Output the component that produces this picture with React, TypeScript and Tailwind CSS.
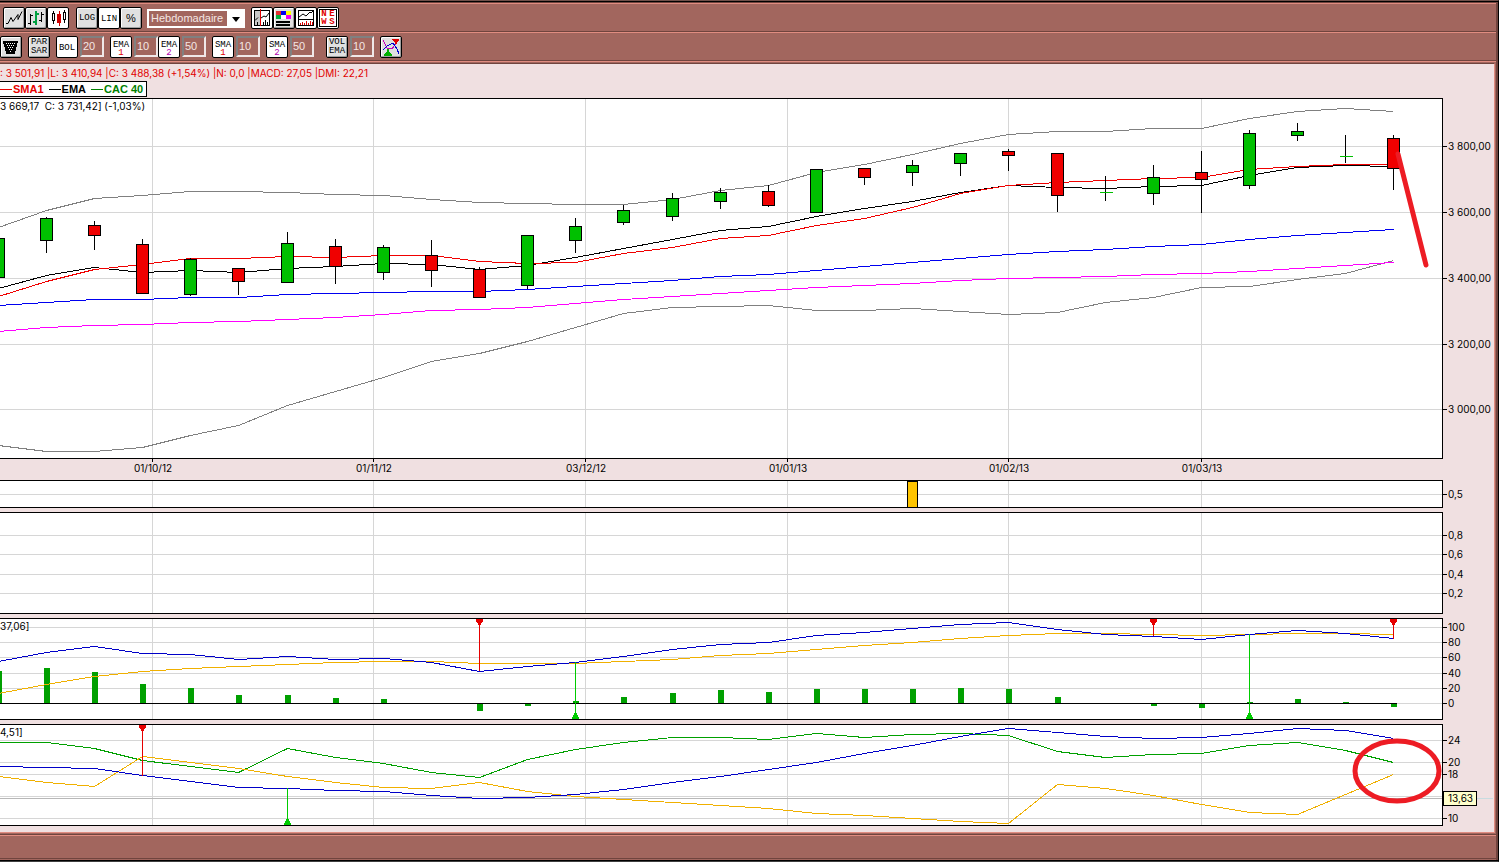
import type { ReactNode } from "react";

const GREEN = "#00c000";
const RED = "#f00000";

// x position of each weekly bar
const XS = [
  -2, 46, 94, 142, 190, 238, 287, 335, 383, 431, 479, 527, 575, 623, 672, 720,
  768, 816, 864, 912, 960, 1008, 1057, 1105, 1153, 1201, 1249, 1297, 1345, 1393,
];

const MONTHS = [
  { x: 152, label: "01/10/12" },
  { x: 373, label: "01/11/12" },
  { x: 585, label: "03/12/12" },
  { x: 787, label: "01/01/13" },
  { x: 1008, label: "01/02/13" },
  { x: 1201, label: "01/03/13" },
];

// high, body top, body bottom, low, up
const CANDLES: [number, number, number, number, boolean][] = [
  [238, 238, 277, 277, true],
  [216, 218, 240, 252, true],
  [220, 225, 235, 249, false],
  [238, 244, 293, 293, false],
  [257, 259, 294, 295, true],
  [268, 268, 281, 294, false],
  [231, 243, 282, 282, true],
  [238, 246, 266, 283, false],
  [244, 247, 272, 279, true],
  [239, 255, 270, 286, false],
  [266, 269, 297, 297, false],
  [235, 235, 285, 288, true],
  [217, 226, 240, 252, true],
  [204, 210, 222, 224, true],
  [192, 198, 216, 220, true],
  [187, 192, 201, 208, true],
  [184, 191, 205, 206, false],
  [168, 169, 212, 212, true],
  [168, 168, 177, 184, false],
  [159, 165, 172, 185, true],
  [152, 153, 163, 175, true],
  [148, 151, 155, 170, false],
  [153, 153, 195, 211, false],
  [175, 192, 192, 200, true],
  [164, 177, 193, 204, true],
  [150, 172, 179, 212, false],
  [129, 133, 185, 188, true],
  [122, 131, 135, 140, true],
  [134, 156, 156, 162, true],
  [134, 138, 168, 189, false],
];

const SMA = [296, 281, 269, 264, 258, 258, 256, 257, 255, 255, 261, 263, 262, 253, 247, 238, 235, 225, 218, 207, 193, 185, 182, 180, 178, 177, 169, 166, 164, 164];
const EMA = [288, 275, 267, 272, 270, 272, 268, 266, 263, 264, 269, 265, 257, 248, 239, 230, 226, 216, 208, 201, 192, 185, 187, 188, 186, 185, 175, 167, 165, 166];
const SLOW = [305, 302, 299, 299, 297, 297, 294, 293, 292, 291, 291, 289, 286, 283, 280, 276, 274, 270, 266, 262, 258, 254, 251, 249, 246, 244, 239, 235, 232, 229];
const LONG = [331, 327, 325, 324, 322, 321, 319, 317, 314, 310, 309, 307, 303, 299, 296, 293, 290, 287, 285, 283, 280, 278, 277, 276, 274, 273, 271, 268, 265, 262];
const BOL_HIGH = [227, 210, 198, 195, 191, 191, 192, 194, 195, 199, 202, 203, 204, 204, 199, 190, 185, 172, 164, 154, 143, 134, 131, 131, 128, 128, 118, 111, 108, 111];
const BOL_LOW = [445, 451, 451, 447, 435, 425, 405, 391, 377, 361, 353, 341, 327, 313, 307, 306, 305, 310, 310, 308, 311, 314, 312, 302, 297, 287, 286, 279, 273, 260];

const MACD = [661, 652, 646, 653, 654, 659, 656, 659, 658, 662, 671, 666, 662, 656, 649, 644, 642, 635, 632, 628, 624, 622, 629, 634, 636, 639, 634, 630, 633, 638];
const SIGNAL = [693, 684, 676, 671, 668, 666, 664, 662, 661, 661, 663, 663, 663, 661, 659, 655, 653, 649, 645, 642, 638, 635, 633, 633, 634, 635, 634, 633, 633, 634];
const HIST = [671, 668, 672, 684, 688, 695, 695, 698, 699, 703, 710, 705, 701, 697, 693, 690, 692, 689, 689, 689, 688, 689, 697, 703, 705, 707, 702, 699, 702, 706];

const DI_PLUS = [742, 742, 748, 760, 766, 772, 748, 757, 763, 772, 777, 759, 749, 742, 737, 737, 739, 733, 737, 734, 733, 735, 751, 757, 754, 753, 745, 742, 750, 762];
const DI_MINUS = [776, 782, 786, 756, 762, 768, 776, 782, 787, 788, 782, 791, 796, 799, 802, 805, 808, 813, 815, 818, 821, 823, 784, 788, 795, 804, 812, 814, 794, 774];
const ADX = [766, 767, 768, 775, 781, 787, 788, 790, 791, 795, 798, 797, 794, 789, 782, 776, 769, 762, 753, 745, 736, 728, 732, 736, 738, 737, 733, 728, 730, 738];

function Series({ values, color }: { values: number[]; color: string }) {
  return (
    <polyline
      points={values.map((y, i) => `${XS[i]},${y}`).join(" ")}
      fill="none"
      stroke={color}
    />
  );
}

interface PanelProps {
  name: string;
  top: number;
  bottom: number;
  end: number;
  levels: { y: number; label: string }[];
  children?: ReactNode;
  overlay?: ReactNode;
}

function Panel({ name, top, bottom, end, levels, children, overlay }: PanelProps) {
  return (
    <svg
      role="img"
      aria-label={name}
      viewBox={`0 ${top} 1494 ${end - top}`}
      className="block w-full font-[Inter,sans-serif] text-[10px]"
    >
      <g transform="translate(0.5 0.5)" shapeRendering="crispEdges">
        <rect x={-5} y={top} width={1447} height={bottom - top} fill="#fff" />
        {MONTHS.map((m) => (
          <line key={m.x} x1={m.x} x2={m.x} y1={top} y2={bottom} stroke="#d6d6d6" />
        ))}
        {levels.map((l) => (
          <g key={l.y}>
            <line x1={-1} x2={1442} y1={l.y} y2={l.y} stroke="#d6d6d6" />
            {l.label && <line x1={1442} x2={1446} y1={l.y} y2={l.y} stroke="#000" />}
          </g>
        ))}
        {children}
        <rect x={-5} y={top} width={1447} height={bottom - top} fill="none" stroke="#000" />
      </g>
      {levels.map((l) => (
        <text key={l.y} x={1448} y={l.y + 4}>
          {l.label}
        </text>
      ))}
      {overlay}
    </svg>
  );
}

function SellMark({ x, top, to }: { x: number; top: number; to: number }) {
  return (
    <g fill="#e60000">
      <rect x={x - 0.5} y={top} width={1} height={to - top} />
      <path d={`M${x - 3.5} ${top - 0.5}h7v3h-1v1h-1v2h-3v-2h-1v-1h-1z`} />
    </g>
  );
}

function BuyMark({ x, bottom, to }: { x: number; bottom: number; to: number }) {
  return (
    <g fill="#00cc00">
      <rect x={x - 0.5} y={to} width={1} height={bottom - to} />
      <path d={`M${x - 3.5} ${bottom + 0.5}h7v-2h-1v-2h-1v-2h-3v2h-1v2h-1z`} />
    </g>
  );
}

function PricePanel() {
  return (
    <Panel
      name="CAC 40"
      top={98}
      bottom={458}
      end={480}
      levels={[
        { y: 146, label: "3 800,00" },
        { y: 212, label: "3 600,00" },
        { y: 278, label: "3 400,00" },
        { y: 344, label: "3 200,00" },
        { y: 409, label: "3 000,00" },
      ]}
      overlay={
        <>
          <text x={0} y={110}>
            3 669,17{"\u00a0 "}C: 3 731,42] (-1,03%)
          </text>
          {MONTHS.map((m) => (
            <text key={m.x} x={m.x + 1} y={472} textAnchor="middle">
              {m.label}
            </text>
          ))}
          <line
            x1={1398}
            y1={154}
            x2={1426}
            y2={265}
            stroke="#ed1c24"
            strokeWidth={5}
            strokeLinecap="round"
          />
        </>
      }
    >
      {MONTHS.map((m) => (
        <line key={m.x} x1={m.x} x2={m.x} y1={458} y2={461} stroke="#000" />
      ))}
      <Series values={BOL_HIGH} color="#808080" />
      <Series values={BOL_LOW} color="#808080" />
      <Series values={LONG} color="#ff00ff" />
      <Series values={SLOW} color="#0000f0" />
      <Series values={EMA} color="#000" />
      <Series values={SMA} color="#f00000" />
      {CANDLES.map(([high, open, close, low, up], i) => (
        <g key={XS[i]}>
          {low > high && <line x1={XS[i]} x2={XS[i]} y1={high} y2={low} stroke="#000" />}
          {open === close ? (
            <line x1={XS[i] - 6} x2={XS[i] + 7} y1={open} y2={open} stroke={GREEN} />
          ) : (
            <rect
              x={XS[i] - 6}
              y={open}
              width={12}
              height={close - open}
              fill={up ? GREEN : RED}
              stroke="#000"
            />
          )}
        </g>
      ))}
    </Panel>
  );
}

function MacdPanel() {
  return (
    <Panel
      name="MACD"
      top={618}
      bottom={719}
      end={724}
      levels={[
        { y: 627, label: "100" },
        { y: 642, label: "80" },
        { y: 657, label: "60" },
        { y: 673, label: "40" },
        { y: 688, label: "20" },
        { y: 703, label: "0" },
      ]}
      overlay={
        <text x={0} y={630}>
          37,06]
        </text>
      }
    >
      {HIST.map((y, i) => (
        <rect
          key={XS[i]}
          x={XS[i] - 2.5}
          y={Math.min(y, 703) - 0.5}
          width={6}
          height={y === 703 ? 0 : Math.abs(703 - y) + 1}
          fill="#00a000"
        />
      ))}
      <Series values={SIGNAL} color="#f0b000" />
      <line x1={-1} x2={1396} y1={703} y2={703} stroke="#000" />
      <SellMark x={479} top={619} to={671} />
      <SellMark x={1153} top={619} to={636} />
      <SellMark x={1393} top={619} to={638} />
      <Series values={MACD} color="#0000c8" />
      <BuyMark x={575} bottom={718} to={661} />
      <BuyMark x={1249} bottom={718} to={633} />
    </Panel>
  );
}

function DmiPanel() {
  return (
    <Panel
      name="DMI"
      top={724}
      bottom={825}
      end={832}
      levels={[
        { y: 740, label: "24" },
        { y: 762, label: "20" },
        { y: 774, label: "18" },
        { y: 796, label: "" },
        { y: 818, label: "10" },
      ]}
      overlay={
        <>
          <text x={0} y={736}>
            4,51]
          </text>
          <g shapeRendering="crispEdges">
            <line x1={1477} x2={1493} y1={798.5} y2={798.5} stroke="#c8dce0" />
            <rect x={1443.5} y={791.5} width={33} height={14} fill="#ffffcc" stroke="#000" />
          </g>
          <text x={1448} y={802}>
            13,63
          </text>
          <ellipse
            cx={1397}
            cy={771}
            rx={42}
            ry={30}
            fill="none"
            stroke="#ed1c24"
            strokeWidth={5}
          />
        </>
      }
    >
      <line x1={-1} x2={1442} y1={798} y2={798} stroke="#b8b8b8" />
      <Series values={DI_PLUS} color="#00a000" />
      <Series values={DI_MINUS} color="#f0b000" />
      <Series values={ADX} color="#0000c8" />
      <SellMark x={142} top={725} to={775} />
      <BuyMark x={287} bottom={824} to={787} />
    </Panel>
  );
}

interface ToolProps {
  label: string;
  pressed?: boolean;
  children: ReactNode;
}

function Tool({ label, pressed, children }: ToolProps) {
  return (
    <button
      type="button"
      aria-label={label}
      className={`flex h-[22px] w-[22px] shrink-0 flex-col items-center justify-center rounded-[2px] border border-black font-['Liberation_Mono',monospace] text-[9px] leading-[9px] ${
        pressed
          ? "bg-white"
          : "bg-[#e0e0e0] shadow-[inset_1px_1px_0_#ffffff,inset_-1px_-1px_0_#a0a0a0]"
      }`}
    >
      {children}
    </button>
  );
}

function Icon({ children }: { children: ReactNode }) {
  return (
    <svg
      viewBox="0 0 20 20"
      className="block h-5 w-5"
      fill="none"
      stroke="#000"
      shapeRendering="crispEdges"
      aria-hidden="true"
    >
      {children}
    </svg>
  );
}

function Period({ label, value }: { label: string; value: string }) {
  return (
    <input
      type="text"
      aria-label={label}
      defaultValue={value}
      className="h-[21px] w-6 shrink-0 border-2 border-t-[#808080] border-r-[#f0e8e8] border-b-[#f0e8e8] border-l-[#808080] bg-[#a2665e] p-0 pb-[2px] pl-px font-['Liberation_Sans',sans-serif] text-[11px] leading-[15px] text-[#f4e6e4] outline-none"
    />
  );
}

function Average({ name, index, value }: { name: string; index: string; value: string }) {
  return (
    <>
      <Tool label={`${name} ${index}`} pressed>
        <span className="pt-[3px] leading-[8px]">{name}</span>
        <span className={index === "1" ? "leading-[8px] text-[#e00000]" : "leading-[8px] text-[#b000b0]"}>
          {index}
        </span>
      </Tool>
      <Period label={`${name} ${index} period`} value={value} />
    </>
  );
}

function ChartToolbar() {
  return (
    <div className="flex h-[29px] items-start border-t border-b border-t-[#e08c80] border-b-[#70443e] pt-[3px] pl-[3px]">
      <div className="flex">
        <Tool label="Line chart">
          <Icon>
            <path d="M2 15.500h2l3-6 2 4 5-7v5l4-8" shapeRendering="auto" />
          </Icon>
        </Tool>
        <Tool label="Bar chart">
          <Icon>
            <path d="M4.500 6v11M2 15.500h3M4 7.500h3M15.500 4v10M13 12.500h3M15 6.500h3" />
            <path d="M10 2.500v14M7 13.500h3M10 5.500h3" stroke="#00a040" strokeWidth={2} />
          </Icon>
        </Tool>
        <Tool label="Candlesticks" pressed>
          <Icon>
            <path d="M5.500 3v3M5.500 12v4M16.500 2v3M16.500 12v3" />
            <rect x={4.500} y={5.500} width={2} height={7} />
            <rect x={15.500} y={4.500} width={2} height={7} />
            <path d="M11 3v15" stroke="#d00000" />
            <rect x={9.500} y={6.500} width={3} height={8} fill="#d00000" stroke="#d00000" />
          </Icon>
        </Tool>
      </div>
      <div className="ml-[7px] flex">
        <Tool label="Logarithmic scale">LOG</Tool>
        <Tool label="Linear scale" pressed>
          <span className="pt-[2px]">LIN</span>
        </Tool>
        <Tool label="Percent scale">
          <span className="font-['Liberation_Sans',sans-serif] text-[11px]">%</span>
        </Tool>
      </div>
      <div className="relative mt-[2px] ml-[5px]">
        <select
          aria-label="Period"
          className="block h-[19px] w-[98px] appearance-none border-2 border-white bg-[linear-gradient(to_right,#a2665e_78px,#ffffff_78px)] p-0 pl-[2px] font-['Liberation_Sans',sans-serif] text-[11px] leading-[15px] text-[#f4e6e4] outline-none"
        >
          <option>Hebdomadaire</option>
        </select>
        <svg
          viewBox="0 0 8 5"
          className="pointer-events-none absolute top-2 right-[5px] h-[5px] w-2"
          aria-hidden="true"
        >
          <path d="M0 0h8L4 5z" />
        </svg>
      </div>
      <div className="ml-[6px] flex">
        <Tool label="Cursor" pressed>
          <Icon>
            <rect x={2.500} y={2.500} width={15} height={15} />
            <path d="M3 3h5v14H3z" fill="#c8c8c8" stroke="none" />
            <path d="M3 12.500l3-3M9 10l3-2 2 1 3-4" shapeRendering="auto" />
            <path d="M5.500 14v3M11.500 14v3M13.500 12v5M15.500 14v3" />
            <path d="M8.500 1v17" stroke="#e00000" />
          </Icon>
        </Tool>
        <Tool label="Colours">
          <Icon>
            <g stroke="none">
              <path d="M2 3h5v4H2z" fill="#e03030" />
              <path d="M7 3h5v4H7z" fill="#0000f0" />
              <path d="M12 3h5v4h-5z" fill="#ffff00" />
              <path d="M2 7h5v4H2z" fill="#00b040" />
              <path d="M7 7h5v4H7z" fill="#fff" />
              <path d="M12 7h5v4h-5z" fill="#f000f0" />
              <path d="M2 13h14v2H2zM2 16h14v2H2z" fill="#000" />
            </g>
          </Icon>
        </Tool>
        <Tool label="Volumes" pressed>
          <Icon>
            <rect x={2.500} y={2.500} width={15} height={15} />
            <path d="M2 11.500h16" />
            <path d="M3 9l4-3 3 2 4-4 1 1 2-2" shapeRendering="auto" />
            <path d="M4.500 15v2M6.500 14v3M8.500 15v2M10.500 13v4M12.500 15v2M14.500 13v4M16.500 14v3" stroke="#e00000" />
          </Icon>
        </Tool>
        <Tool label="News" pressed>
          <span className="grid h-[18px] w-[18px] grid-cols-2 place-items-center border border-black pt-px text-[9px] leading-[7px] font-bold text-[#e00000]">
            <span>N</span>
            <span>E</span>
            <span>W</span>
            <span>S</span>
          </span>
        </Tool>
      </div>
    </div>
  );
}

function IndicatorToolbar() {
  return (
    <div className="flex h-[29px] items-start gap-[6px] border-t border-b border-t-[#e08c80] border-b-[#70443e] pt-[3px]">
      <Tool label="Clear indicators">
        <Icon>
          <path d="M3 4.500h13l-3 11H6z" fill="#000" strokeWidth={2} />
          <path
            d="M5 6.500h1M7 6.500h1M9 6.500h1M11 6.500h1M13 6.500h1M6 8.500h1M8 8.500h1M10 8.500h1M12 8.500h1M7 10.500h1M9 10.500h1M11 10.500h1M8 12.500h1M10 12.500h1M9 14.500h1"
            stroke="#fff"
          />
        </Icon>
      </Tool>
      <Tool label="Parabolic SAR">
        <span>PAR</span>
        <span>SAR</span>
      </Tool>
      <div className="flex gap-[2px]">
        <Tool label="Bollinger" pressed>
          <span className="pt-[2px]">BOL</span>
        </Tool>
        <Period label="Bollinger period" value="20" />
      </div>
      <div className="flex">
        <div className="flex gap-[2px]">
          <Average name="EMA" index="1" value="10" />
        </div>
        <div className="flex gap-[2px]">
          <Average name="EMA" index="2" value="50" />
        </div>
      </div>
      <div className="flex gap-[2px]">
        <Average name="SMA" index="1" value="10" />
      </div>
      <div className="flex gap-[2px]">
        <Average name="SMA" index="2" value="50" />
      </div>
      <div className="ml-[6px] flex gap-[2px]">
        <Tool label="Volume EMA">
          <span>VOL</span>
          <span>EMA</span>
        </Tool>
        <Period label="Volume EMA period" value="10" />
      </div>
      <Tool label="Signals">
        <Icon>
          <path d="M2 3l4 8 5 1 6-9" stroke="#c000c0" />
          <path d="M2 13l4-4 6-3 4 6 2 5" stroke="#0000d0" />
          <path d="M11 2h7v1l-2 2v2h-2v-2l-3-2z" fill="#e00000" stroke="none" />
          <path d="M6 12h2v3l3 2v2H3v-2l3-2z" fill="#00b000" stroke="none" />
        </Icon>
      </Tool>
    </div>
  );
}

function Legend() {
  return (
    <ul className="mb-px flex h-4 w-[147px] items-center gap-[5px] border-t border-r border-b border-black bg-white text-[11px] leading-[14px] font-bold whitespace-nowrap">
      <li className="flex items-center gap-px text-[#e60000]">
        <span className="h-px w-3 bg-current" />
        SMA1
      </li>
      <li className="flex items-center gap-px text-black">
        <span className="h-px w-3 bg-current" />
        EMA
      </li>
      <li className="flex items-center gap-px text-[#008000]">
        <span className="h-px w-3 bg-current" />
        CAC 40
      </li>
    </ul>
  );
}

export default function App() {
  return (
    <div className="flex min-h-screen flex-col overflow-hidden border-t border-r border-b border-t-[#70504a] border-r-black border-b-[#404040] font-['Liberation_Sans',sans-serif]">
      <div className="flex flex-1 flex-col border-t border-b border-black">
        <div className="flex flex-1 flex-col border-t border-r-2 border-[#70443e] bg-[#a2665e]">
          <header>
            <ChartToolbar />
            <IndicatorToolbar />
          </header>
          <div className="border-t border-b border-t-[#e08c80] border-b-[#70443e] py-px pr-px">
            <main className="border-t border-r border-b border-t-[#70443e] border-r-[#e08c80] border-b-[#e08c80] bg-[#f0e0e1]">
              <p className="h-[17px] font-[Inter,sans-serif] text-[10px] leading-[18px] whitespace-nowrap text-[#e00000]">
                : 3 501,91 |L: 3 410,94 |C: 3 488,38 (+1,54%) |N: 0,0 |MACD: 27,05 |DMI: 22,21
              </p>
              <Legend />
              <PricePanel />
              <Panel
                name="Signals"
                top={480}
                bottom={507}
                end={512}
                levels={[{ y: 494, label: "0,5" }]}
              >
                <rect x={907} y={481} width={10} height={26} fill="#ffc400" stroke="#000" />
              </Panel>
              <Panel
                name="Volume"
                top={512}
                bottom={613}
                end={618}
                levels={[
                  { y: 535, label: "0,8" },
                  { y: 554, label: "0,6" },
                  { y: 574, label: "0,4" },
                  { y: 593, label: "0,2" },
                ]}
              />
              <MacdPanel />
              <DmiPanel />
            </main>
          </div>
          <footer className="mb-px min-h-6 flex-1 border-t border-b border-t-[#e08c80] border-b-[#70443e]" />
        </div>
      </div>
    </div>
  );
}
